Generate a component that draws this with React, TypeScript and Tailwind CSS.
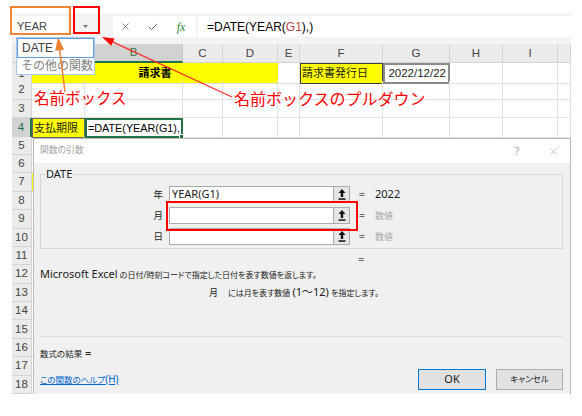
import React from 'react';
import { X, Check } from 'lucide-react';

// sheet columns: row header, A..I, part of J
const cols = 'grid grid-cols-[20px_53px_98px_40px_55px_22px_83px_67px_53px_55px_13px]';
const letters = ['A', 'B', 'C', 'D', 'E', 'F', 'G', 'H', 'I', 'J'];

const cellBase = 'border-r border-b border-[#e1e1e1] flex items-center whitespace-nowrap text-[11px] text-black';
const headBase = 'flex items-center justify-center border-r border-b border-[#d4d4d4] bg-[#ebebeb] text-[11.5px] text-[#444]';
const headActiveCol = 'flex items-center justify-center border-r border-[#c6c6c6] border-b-2 border-b-[#217346] bg-[#d2d2d2] text-[11.5px] text-[#217346]';
const headActiveRow = 'flex items-center justify-center border-b border-[#c6c6c6] border-r-2 border-r-[#217346] bg-[#d2d2d2] text-[11.5px] text-[#217346]';

const RowHead: React.FC<{ n: number; active?: boolean }> = ({ n, active }) => (
  <div className={active ? headActiveRow : headBase}>{n}</div>
);

const RefIcon = () => (
  <svg width="8" height="11" viewBox="0 0 8 11">
    <path d="M4 0 L7.5 4 H5.2 V8 H2.8 V4 H0.5 Z" fill="#111" />
    <rect x="0.5" y="9.3" width="7" height="1.5" fill="#111" />
  </svg>
);

const ArgRow: React.FC<{ label: string; value?: string; result?: string }> = ({ label, value, result }) => (
  <div className="flex items-center h-[17px]">
    <span className="w-[128px] pr-[6px] text-right text-[9.5px] leading-none">{label}</span>
    <div className="w-[165px] h-[17px] bg-white border border-[#ababab] flex items-center pl-[2px] text-[11px]">
      {value}
    </div>
    <div className="w-[16px] h-[17px] bg-[#e6e6e6] border border-l-0 border-[#ababab] flex items-center justify-center">
      <RefIcon />
    </div>
    <span className="ml-[8px] w-[8px] text-center text-[11px] text-[#6b6b6b]">=</span>
    {result ? (
      <span className="ml-[9px] text-[11px]">{result}</span>
    ) : (
      <span className="ml-[9px] text-[9px] text-[#a8a8a8]">数値</span>
    )}
  </div>
);

const FormulaBar = () => (
  <div className="h-[31px] bg-[#f3f3f3] flex items-start pt-[3px]">
    <div className="w-[58px] h-[21px] bg-white flex items-center pl-[5px] text-[11px] text-[#444]">YEAR</div>
    <div className="w-[30px] h-[21px] flex items-center justify-center">
      <svg width="5" height="3" viewBox="0 0 5 3">
        <path d="M0 0 H5 L2.5 3 Z" fill="#777" />
      </svg>
    </div>
    <div className="ml-[13px] w-[83px] h-[21px] bg-white flex items-center gap-[4px]">
      <span className="w-[24px] flex justify-center">
        <X size={11} strokeWidth={1.5} color="#555" />
      </span>
      <span className="w-[24px] flex justify-center">
        <Check size={12} strokeWidth={1.8} color="#555" />
      </span>
      <span className="w-[24px] text-center font-['Liberation_Serif',serif] italic text-[12px] text-[#2f8a3e]">fx</span>
    </div>
    <div className="ml-[2px] flex-1 h-[21px] bg-white flex items-center pl-[9px] text-[12px] text-black">
      =DATE(YEAR(<span className="text-[#b5473f]">G1</span>),)
    </div>
  </div>
);

export default function App() {
  return (
    <div className="relative w-[582px] h-[416px] overflow-hidden bg-white pt-[13px] pl-[12px] font-['Liberation_Sans','Noto_Sans_CJK_JP',sans-serif]">
      <div className="w-[559px]">
        <FormulaBar />

        {/* column headers */}
        <div className={`${cols} h-[19px]`}>
          <div className="bg-[#ebebeb] border-r border-b border-[#d4d4d4]" />
          {letters.map((l) => (
            <div key={l} className={l === 'B' ? headActiveCol : headBase}>
              {l === 'J' ? '' : l}
            </div>
          ))}
        </div>

        {/* row 1 */}
        <div className={`${cols} h-[18.4px]`}>
          <RowHead n={1} />
          <div className="col-span-4 bg-[#ffff00] border-b border-[#e1e1e1] flex items-center justify-center text-[11px] font-bold text-black">
            請求書
          </div>
          <div className={cellBase} />
          <div className="bg-[#ffff00] border border-[#404040] flex items-center pl-[1px] text-[11px] text-[#222]">請求書発行日</div>
          <div className="border-2 border-[#8a8a8a] flex items-center justify-end pr-[2px] text-[11.5px] text-[#222]">2022/12/22</div>
          <div className={cellBase} />
          <div className={cellBase} />
          <div className={cellBase} />
        </div>

        {/* rows 2, 3 */}
        {[2, 3].map((n) => (
          <div key={n} className={`${cols} h-[18.4px]`}>
            <RowHead n={n} />
            {letters.map((l) => (
              <div key={l} className={cellBase} />
            ))}
          </div>
        ))}

        {/* row 4 */}
        <div className={`${cols} h-[18.4px]`}>
          <RowHead n={4} active />
          <div className="bg-[#ffff00] border border-[#666] flex items-center pl-[1px] text-[11px] text-[#222]">支払期限</div>
          <div className="relative border-2 border-[#217346] flex items-center pl-[1px] whitespace-nowrap text-[10.8px] text-black">
            =DATE(YEAR(G1),
            <span className="absolute -right-[3px] -bottom-[3px] w-[5px] h-[5px] bg-[#217346] border border-white" />
          </div>
          {letters.slice(2).map((l) => (
            <div key={l} className={cellBase} />
          ))}
        </div>

        {/* rows 5 - 18 */}
        {Array.from({ length: 14 }, (_, i) => i + 5).map((n) => (
          <div key={n} className={`${cols} h-[18.4px]`}>
            <RowHead n={n} />
            {letters.map((l) => (
              <div key={l} className={n === 7 && l === 'A' ? `${cellBase} bg-[#ffff00]` : cellBase} />
            ))}
          </div>
        ))}
      </div>

      {/* name box highlight + dropdown highlight */}
      <div className="absolute left-[10px] top-[6px] w-[61px] h-[29px] border-2 border-[#ee8433]" />
      <div className="absolute left-[73px] top-[6px] w-[27px] h-[28px] border-2 border-[#ff0000]" />

      {/* name box dropdown list */}
      <div className="absolute left-[16px] top-[37px] w-[79px] h-[38px] bg-white border border-[#a8c8ea] overflow-hidden">
        <div className="h-[20px] border border-[#5f9cdb] flex items-center pl-[4px] text-[12px] text-[#404040]">DATE</div>
        <div className="h-[16px] flex items-center pl-[4px] whitespace-nowrap text-[12px] text-[#808080]">その他の関数...</div>
      </div>

      {/* annotations */}
      <span className="absolute left-[34px] top-[90px] text-[15.5px] leading-none text-[#ff0000] font-['Noto_Sans_CJK_JP',sans-serif]">
        名前ボックス
      </span>
      <span className="absolute left-[234px] top-[90px] text-[16px] leading-none text-[#ff0000] font-['Noto_Sans_CJK_JP',sans-serif]">
        名前ボックスのプルダウン
      </span>

      {/* dialog */}
      <div className="absolute left-[33px] top-[138px] w-[538px] h-[256px] overflow-hidden border-l border-t border-r border-[#b9b9b9] bg-[#f0f0f0] flex flex-col text-[#1a1a1a] font-['Noto_Sans','Noto_Sans_CJK_JP',sans-serif] [font-feature-settings:'palt']">
        <div className="h-[24px] shrink-0 bg-white flex items-center pl-[6px]">
          <span className="text-[8.8px] text-[#a0a0a0]">関数の引数</span>
          <span className="ml-auto w-[12px] text-center text-[10px] text-[#a0a0a0]">?</span>
          <span className="ml-[24px] mr-[11px] w-[12px] flex justify-center">
            <X size={11} strokeWidth={1.2} color="#9b9b9b" />
          </span>
        </div>

        <div className="flex-1 pl-[6px] pr-[7px] flex flex-col">
          <div className="relative mt-[11px] h-[75px] shrink-0 border border-[#d7d7d7] pt-[11px] flex flex-col gap-[4px]">
            <span className="absolute left-[4px] -top-[8px] bg-[#f0f0f0] px-[1px] text-[11px] leading-[14px]">DATE</span>
            <ArgRow label="年" value="YEAR(G1)" result="2022" />
            <ArgRow label="月" />
            <ArgRow label="日" />
          </div>

          <div className="mt-[4px] h-[12px] pl-[318px] text-[11px] leading-[12px] text-[#6b6b6b]">=</div>

          <div className="h-[14px] leading-[14px] whitespace-nowrap">
            <span className="text-[11px]">Microsoft Excel</span>
            <span className="text-[8px]"> の日付/時刻コードで指定した日付を表す数値を返します。</span>
          </div>

          <div className="mt-[4px] h-[14px] leading-[14px] pl-[169px] whitespace-nowrap">
            <span className="text-[9px]">月</span>
            <span className="ml-[10px] text-[8px]">には月を表す数値 </span>
            <span className="text-[11px]">(1～12)</span>
            <span className="text-[8px]"> を指定します。</span>
          </div>

          <div className="mt-[39px] border-t border-[#dcdcdc]" />

          <div className="mt-[7px] h-[14px] leading-[14px] whitespace-nowrap">
            <span className="text-[8.5px]">数式の結果</span>
            <span className="text-[11px]"> =</span>
          </div>

          <div className="mt-[11px] h-[21px] shrink-0 flex items-center">
            <span className="text-[8.5px] text-[#0066cc] underline">
              この関数のヘルプ<span className="text-[10px]">(H)</span>
            </span>
            <button className="ml-auto w-[68px] h-[21px] bg-[#e1e1e1] border border-[#0078d7] text-[11px]">OK</button>
            <button className="ml-[10px] w-[67px] h-[21px] bg-[#e1e1e1] border border-[#adadad] text-[8.5px]">キャンセル</button>
          </div>
        </div>
      </div>

      {/* highlight around the month argument */}
      <div className="absolute left-[166px] top-[201px] w-[192px] h-[30px] border-2 border-[#ff0000]" />

      {/* arrows */}
      <svg className="absolute left-0 top-0 pointer-events-none" width="582" height="416" viewBox="0 0 582 416">
        <line x1="65" y1="92" x2="59.6" y2="49" stroke="#ee8433" strokeWidth="1.6" />
        <polygon points="58,37 64.1,49.8 55.2,50.8" fill="#ee8433" />
        <line x1="232" y1="97" x2="112" y2="41.6" stroke="#ff2a2a" strokeWidth="1.2" />
        <polygon points="102,37 114.6,38.5 111.2,45.7" fill="#ff0000" />
      </svg>
    </div>
  );
}
